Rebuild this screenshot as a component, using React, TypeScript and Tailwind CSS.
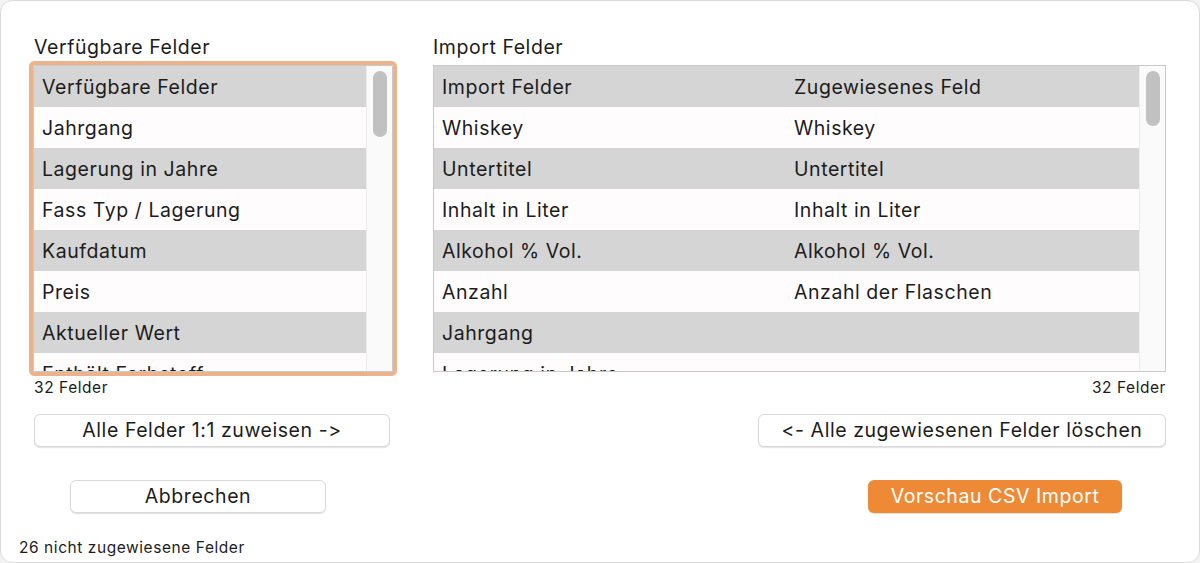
import React from "react";

const leftItems = [
  "Verfügbare Felder",
  "Jahrgang",
  "Lagerung in Jahre",
  "Fass Typ / Lagerung",
  "Kaufdatum",
  "Preis",
  "Aktueller Wert",
  "Enthält Farbstoff",
];

const rightItems: [string, string][] = [
  ["Import Felder", "Zugewiesenes Feld"],
  ["Whiskey", "Whiskey"],
  ["Untertitel", "Untertitel"],
  ["Inhalt in Liter", "Inhalt in Liter"],
  ["Alkohol % Vol.", "Alkohol % Vol."],
  ["Anzahl", "Anzahl der Flaschen"],
  ["Jahrgang", ""],
  ["Lagerung in Jahre", ""],
];

function ScrollTrack({ thumbH }: { thumbH: string }) {
  return (
    <div className="flex w-[26px] shrink-0 justify-center border-l border-[#ececec] bg-[#fafafa] pt-[5px]">
      <div className={`w-[14px] rounded-full bg-[#c1c1c1] ${thumbH}`} />
    </div>
  );
}

export default function App() {
  return (
    <div
      className="h-[563px] w-[1200px] bg-[#f3f3f3] tracking-[0.035em] text-[#1c1c1c] [font-feature-settings:'calt'_0,'liga'_0]"
      style={{ fontFamily: "Inter, 'Liberation Sans', Arial, sans-serif" }}
    >
      <div className="flex h-full w-full flex-col rounded-[12px] border border-[#dadada] bg-white">
        <div className="flex gap-[40px] pl-[32px] pr-[33px] pt-[35px]">
          {/* Left column */}
          <div className="flex w-[360px] flex-col">
            <div className="pl-[1px] text-[19.5px] leading-[22px]">Verfügbare Felder</div>
            <div className="mt-[7px] flex h-[307px] overflow-hidden rounded-[2px] border border-[#c9c9c9] shadow-[0_0_0_4px_#ebb38c]">
              <div className="flex-1 overflow-hidden">
                {leftItems.map((t, i) => (
                  <div
                    key={i}
                    className={`flex h-[41px] items-center px-[8px] pt-[3px] text-[19.5px] ${i % 2 === 0 ? "bg-[#d5d5d5]" : "bg-[#fefcfd]"}`}
                  >
                    {t}
                  </div>
                ))}
              </div>
              <ScrollTrack thumbH="h-[66px]" />
            </div>
            <div className="mt-[7px] pl-[1px] text-[15.5px] leading-[18px]">32 Felder</div>
            <button className="ml-[1px] mt-[17px] h-[33px] w-[356px] self-start rounded-[6px] border border-[#d9d9d9] bg-white text-[19.5px] shadow-[0_1px_1px_rgba(0,0,0,0.12)]">
              Alle Felder 1:1 zuweisen -&gt;
            </button>
          </div>

          {/* Right column */}
          <div className="flex flex-1 flex-col">
            <div className="text-[19.5px] leading-[22px]">Import Felder</div>
            <div className="mt-[7px] flex h-[307px] overflow-hidden border border-[#c9c9c9]">
              <div className="flex-1 overflow-hidden">
                {rightItems.map(([a, b], i) => (
                  <div
                    key={i}
                    className={`grid h-[41px] grid-cols-[352px_1fr] items-center pt-[3px] text-[19.5px] ${i % 2 === 0 ? "bg-[#d5d5d5]" : "bg-[#fefcfd]"}`}
                  >
                    <div className="px-[8px]">{a}</div>
                    <div className="px-[8px]">{b}</div>
                  </div>
                ))}
              </div>
              <ScrollTrack thumbH="h-[55px]" />
            </div>
            <div className="mt-[7px] text-right text-[15.5px] leading-[18px]">32 Felder</div>
            <button className="mt-[17px] h-[33px] w-[408px] self-end rounded-[6px] border border-[#d9d9d9] bg-white text-[19.5px] shadow-[0_1px_1px_rgba(0,0,0,0.12)]">
              &lt;- Alle zugewiesenen Felder löschen
            </button>
          </div>
        </div>

        {/* Bottom buttons */}
        <div className="mt-[33px] flex justify-between pl-[69px] pr-[77px]">
          <button className="h-[33px] w-[256px] rounded-[6px] border border-[#d9d9d9] bg-white text-[19.5px] shadow-[0_1px_1px_rgba(0,0,0,0.12)]">
            Abbrechen
          </button>
          <button className="h-[33px] w-[254px] rounded-[6px] bg-[#ee8a36] text-[19.5px] text-white shadow-[0_1px_1px_rgba(0,0,0,0.12)]">
            Vorschau CSV Import
          </button>
        </div>

        <div className="mt-[26px] pl-[18px] text-[15.5px] leading-[18px]">26 nicht zugewiesene Felder</div>
      </div>
    </div>
  );
}
